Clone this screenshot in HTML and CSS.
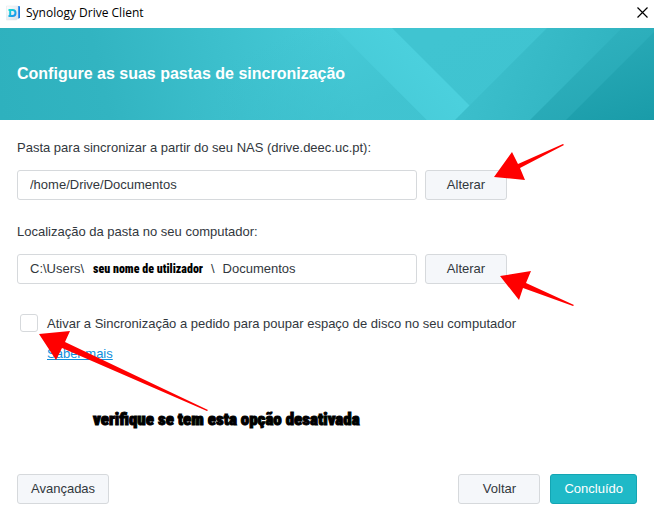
FILE: index.html
```html
<!DOCTYPE html>
<html lang="pt">
<head>
<meta charset="utf-8">
<title>Synology Drive Client</title>
<link rel="stylesheet" href="styles.css">
</head>
<body>
<div class="window">
  <header class="titlebar">
    <svg class="app-icon" viewBox="0 0 16 16" aria-hidden="true">
      <defs>
        <linearGradient id="d" x1="0" y1="0" x2="1" y2="1"><stop offset="0" stop-color="#14dcd2"/><stop offset="1" stop-color="#1a8ff0"/></linearGradient>
        <linearGradient id="p" x1="0" y1="0" x2="1" y2="1"><stop offset="0" stop-color="#ffffff"/><stop offset="1" stop-color="#d3dde6"/></linearGradient>
      </defs>
      <path d="M11 1h2q1 0 1 1v11l-3 1z" fill="#167ee8"/>
      <path d="M.5 1H12v12.500L10.500 15H.5z" fill="url(#p)" stroke="#dde4ea" stroke-width=".5"/>
      <path d="M2.500 5h4a3 3 0 0 1 0 6h-4M4.200 5v6" fill="none" stroke="url(#d)" stroke-width="2"/>
    </svg>
    <span class="app-name">Synology Drive Client</span>
    <button class="close" type="button" aria-label="Fechar">
      <svg viewBox="0 0 11 11"><path d="M.5.5l10 10M10.500.5l-10 10" stroke="#000" stroke-width="1.200"/></svg>
    </button>
  </header>

  <section class="banner">
    <svg class="banner-art" viewBox="0 0 654 92" preserveAspectRatio="none" aria-hidden="true">
      <defs>
        <linearGradient id="b0" gradientUnits="userSpaceOnUse" x1="0" y1="80" x2="340" y2="0"><stop offset="0" stop-color="#2eb1be"/><stop offset=".3" stop-color="#32b4c1"/><stop offset="1" stop-color="#47cbd8"/></linearGradient>
        <linearGradient id="b2" gradientUnits="userSpaceOnUse" x1="460" y1="0" x2="500" y2="92"><stop offset="0" stop-color="#40c4d1"/><stop offset="1" stop-color="#3fc3d0"/></linearGradient>
        <linearGradient id="b3" gradientUnits="userSpaceOnUse" x1="470" y1="20" x2="600" y2="80"><stop offset="0" stop-color="#3dc0cd"/><stop offset="1" stop-color="#30b3c0"/></linearGradient>
        <linearGradient id="b4" gradientUnits="userSpaceOnUse" x1="620" y1="0" x2="654" y2="92"><stop offset="0" stop-color="#2eb0bd"/><stop offset="1" stop-color="#24a5b2"/></linearGradient>
        <linearGradient id="b5" gradientUnits="userSpaceOnUse" x1="620" y1="10" x2="645" y2="92"><stop offset="0" stop-color="#28a9b6"/><stop offset="1" stop-color="#1a9ca9"/></linearGradient>
        <linearGradient id="fade" gradientUnits="userSpaceOnUse" x1="300" y1="0" x2="340" y2="92"><stop offset="0" stop-color="#3bbdca" stop-opacity="0"/><stop offset="1" stop-color="#3bbdca" stop-opacity=".9"/></linearGradient>
        <linearGradient id="band" gradientUnits="userSpaceOnUse" x1="350" y1="40" x2="395" y2="0"><stop offset="0" stop-color="#47cbd8"/><stop offset="1" stop-color="#4bd0dd"/></linearGradient>
      </defs>
      <path fill="url(#b0)" d="M0 0h340l92 92H0z"/>
      <path fill="url(#fade)" d="M190 0h145l92 92H190z" opacity=".6"/>
      <path fill="url(#band)" d="M335 0h58l92 92h-58z"/>
      <path fill="url(#b2)" d="M392 0h160l-80 80z"/>
      <path fill="url(#b3)" d="M547 0h80l-92 92h-80z"/>
      <path fill="url(#b4)" d="M622 0h32v92H530z"/>
      <path fill="url(#b5)" d="M654 4v88h-88z"/>
    </svg>
    <h1>Configure as suas pastas de sincronização</h1>
  </section>

  <main class="content">
    <div class="group">
      <label for="remote">Pasta para sincronizar a partir do seu NAS (drive.deec.uc.pt):</label>
      <div class="row">
        <div class="field"><input class="path" id="remote" type="text" value="/home/Drive/Documentos" readonly></div>
        <div class="target">
          <button class="btn" type="button">Alterar</button>
          <svg class="arrow arrow-remote" viewBox="0 0 71 38" aria-hidden="true"><path d="M0 34L18 9l6 12L69 1l1 1L26 25l5 12z"/></svg>
        </div>
      </div>
    </div>

    <div class="group">
      <label for="local">Localização da pasta no seu computador:</label>
      <div class="row">
        <div class="field">
          <input class="path path-root" id="local" type="text" value="C:\Users\" readonly>
          <strong class="user">seu nome de utilizador</strong>
          <span class="slash">\</span>
          <span>Documentos</span>
        </div>
        <div class="target">
          <button class="btn" type="button">Alterar</button>
          <svg class="arrow arrow-local" viewBox="0 0 75 36" aria-hidden="true"><path d="M0 5L31 0l-5 12 48 22-1 1L23 17l-4 12z"/></svg>
        </div>
      </div>
    </div>

    <div class="option">
      <div class="target tick-cell">
        <input class="tick" id="on-demand" type="checkbox">
        <svg class="arrow arrow-option" viewBox="0 0 170 82" aria-hidden="true"><path d="M0 3L31 0l-5 11L169 79l-1 1L23 17l-6 12z"/></svg>
      </div>
      <label for="on-demand">Ativar a Sincronização a pedido para poupar espaço de disco no seu computador</label>
      <a class="more" href="#">Saber mais</a>
    </div>
    <p class="note">verifique se tem esta opção desativada</p>
  </main>

  <footer class="footer">
    <button class="btn advanced" type="button">Avançadas</button>
    <button class="btn" type="button">Voltar</button>
    <button class="btn primary" type="button">Concluído</button>
  </footer>
</div>
</body>
</html>
```

FILE: styles.css
```css
* { box-sizing: border-box; }

body {
  margin: 0;
  background: #fff;
  color: #32373d;
  font: 13px/18px "Liberation Sans", Arial, sans-serif;
}

button, input { font: inherit; color: inherit; }

.window {
  display: flex;
  flex-direction: column;
  min-height: 100vh;
}

.titlebar {
  display: flex;
  align-items: center;
  height: 28px;
  padding: 0 6px 3px;
  gap: 4px;
  color: #000;
  font: 12px/18px "Open Sans", "Noto Sans", sans-serif;
}
.app-icon { width: 16px; height: 16px; }
.app-name { flex: 1; }
.close {
  display: grid;
  place-items: center;
  padding: 0;
  border: 0;
  background: none;
}
.close svg { width: 11px; height: 11px; }

.banner {
  display: grid;
  position: relative;
  align-items: center;
  height: 92px;
  padding: 0 17px;
  background: #36b9c6;
}
.banner-art {
  position: absolute;
  inset: 0;
  width: 100%;
  height: 100%;
}
h1 {
  position: relative;
  margin: 0;
  color: #fff;
  font-size: 16px;
  line-height: 20px;
}

.content {
  flex: 1;
  display: flex;
  flex-direction: column;
  gap: 22px;
  padding: 18px 17px 0;
}
.group { display: grid; gap: 12px; }
.group label { line-height: 20px; }
.row { display: flex; gap: 8px; }

.field {
  flex: 0 1 400px;
  display: flex;
  align-items: center;
  min-width: 0;
  height: 30px;
  padding: 0 12px;
  border: 1px solid #d6d9dc;
  border-radius: 3px;
}
.path {
  flex: 1;
  min-width: 0;
  padding: 0;
  border: 0;
  outline: 0;
  background: none;
}
.path-root { flex: 0 0 63px; }
.user, .note {
  color: #000;
  font-family: Impact, "Roboto Condensed", "Liberation Sans", sans-serif;
  font-weight: 900;
}
.user { font-size: 12px; }
.slash { margin: 0 8px; }

.btn {
  min-width: 82px;
  height: 30px;
  padding: 0 13px;
  border: 1px solid #d6d9dc;
  border-radius: 3px;
  background: #f5f7fa;
}
.primary {
  border-color: #14a5b3;
  background: #1fb9c7;
  color: #fff;
}

.target { position: relative; }
.arrow {
  position: absolute;
  z-index: 1;
  fill: #f00;
  pointer-events: none;
}
.arrow-remote { left: 69px; top: -27px; width: 71px; height: 38px; }
.arrow-local { left: 75px; top: 17px; width: 75px; height: 36px; }
.arrow-option { left: 19px; top: 17px; width: 170px; height: 82px; }

.option {
  display: grid;
  grid-template-columns: 18px 1fr;
  gap: 10px 9px;
  padding: 8px 3px 0;
}
.option label, .more { line-height: 20px; }
.tick-cell { height: 18px; }
.tick {
  appearance: none;
  display: block;
  width: 18px;
  height: 18px;
  margin: 0;
  border: 1px solid #d6d9dc;
  border-radius: 3px;
  background: #fff;
}
.more { grid-column: 2; justify-self: start; color: #0f8fdc; }

.note {
  margin: 23px 76px 0;
  font-size: 17px;
  line-height: 20px;
  -webkit-text-stroke: 1px #000;
}

.footer {
  display: flex;
  gap: 10px;
  padding: 0 17px 17px;
}
.advanced { margin-right: auto; }
```
